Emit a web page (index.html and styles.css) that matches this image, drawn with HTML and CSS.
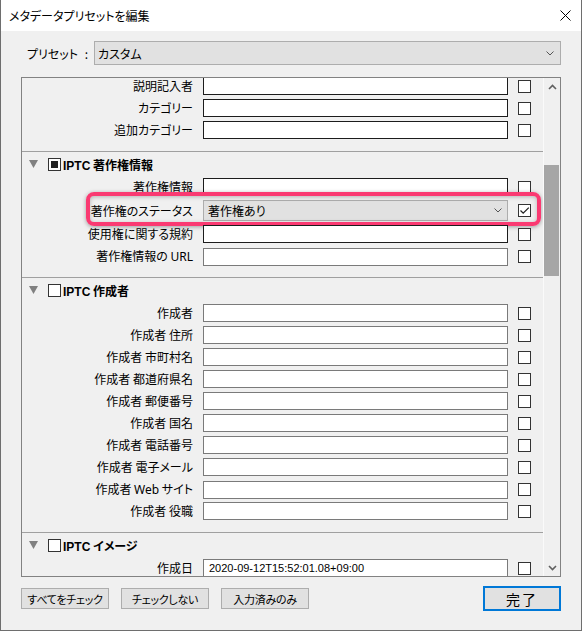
FILE: index.html
```html
<!DOCTYPE html>
<html lang="ja">
<head>
<meta charset="utf-8">
<title>メタデータプリセットを編集</title>
<link rel="stylesheet" href="styles.css">
</head>
<body>
<div class="window">
  <div class="titlebar">
    <span class="title">メタデータプリセットを編集</span>
    <svg class="close" width="11" height="11" viewBox="0 0 11 11"><path d="M0.5 0.5L10.5 10.5M10.5 0.5L0.5 10.5" stroke="#000" stroke-width="1" fill="none"/></svg>
  </div>
  <div class="content">
    <div class="preset-row">
      <div class="preset-label"><span>プリセット</span><span>:</span></div>
      <div class="select preset-select">
        <span>カスタム</span>
        <svg width="8" height="5" viewBox="0 0 8 5"><polyline points="0.5,0.5 4,4 7.5,0.5" fill="none" stroke="#555" stroke-width="1"/></svg>
      </div>
    </div>

    <div class="panel">
      <div class="list">
        <div class="scroll">
          <div class="group">
            <div class="row"><span class="label">説明記入者</span><span class="input dark"></span><span class="cb"></span></div>
            <div class="row"><span class="label">カテゴリー</span><span class="input dark"></span><span class="cb"></span></div>
            <div class="row"><span class="label">追加カテゴリー</span><span class="input dark"></span><span class="cb"></span></div>
          </div>
          <div class="sep"></div>

          <div class="group">
            <div class="header">
              <svg class="tri" width="9" height="8" viewBox="0 0 9 8"><polygon points="0,0 9,0 4.5,8" fill="#808080"/></svg>
              <span class="cb mixed"></span>
              <span class="htext"><span class="iptc">IPTC</span> 著作権情報</span>
            </div>
            <div class="row"><span class="label">著作権情報</span><span class="input dark"></span><span class="cb"></span></div>
            <div class="row tall">
              <span class="label">著作権のステータス</span>
              <span class="select status-select">
                <span>著作権あり</span>
                <svg width="8" height="5" viewBox="0 0 8 5"><polyline points="0.5,0.5 4,4 7.5,0.5" fill="none" stroke="#555" stroke-width="1"/></svg>
              </span>
              <span class="cb checked"><svg width="11" height="11" viewBox="0 0 11 11"><polyline points="1.5,5.5 4.2,8.2 9.8,2.6" fill="none" stroke="#222" stroke-width="1.3"/></svg></span>
              <span class="highlight"></span>
            </div>
            <div class="row"><span class="label">使用権に関する規約</span><span class="input dark"></span><span class="cb"></span></div>
            <div class="row"><span class="label">著作権情報の <span class="latin">URL</span></span><span class="input"></span><span class="cb"></span></div>
          </div>
          <div class="sep"></div>

          <div class="group">
            <div class="header">
              <svg class="tri" width="9" height="8" viewBox="0 0 9 8"><polygon points="0,0 9,0 4.5,8" fill="#808080"/></svg>
              <span class="cb"></span>
              <span class="htext"><span class="iptc">IPTC</span> 作成者</span>
            </div>
            <div class="row"><span class="label">作成者</span><span class="input"></span><span class="cb"></span></div>
            <div class="row"><span class="label">作成者 住所</span><span class="input"></span><span class="cb"></span></div>
            <div class="row"><span class="label">作成者 市町村名</span><span class="input"></span><span class="cb"></span></div>
            <div class="row"><span class="label">作成者 都道府県名</span><span class="input"></span><span class="cb"></span></div>
            <div class="row"><span class="label">作成者 郵便番号</span><span class="input"></span><span class="cb"></span></div>
            <div class="row"><span class="label">作成者 国名</span><span class="input"></span><span class="cb"></span></div>
            <div class="row"><span class="label">作成者 電話番号</span><span class="input"></span><span class="cb"></span></div>
            <div class="row"><span class="label">作成者 電子メール</span><span class="input"></span><span class="cb"></span></div>
            <div class="row"><span class="label">作成者 <span class="latin">Web</span> サイト</span><span class="input"></span><span class="cb"></span></div>
            <div class="row"><span class="label">作成者 役職</span><span class="input"></span><span class="cb"></span></div>
          </div>
          <div class="sep"></div>

          <div class="group">
            <div class="header">
              <svg class="tri" width="9" height="8" viewBox="0 0 9 8"><polygon points="0,0 9,0 4.5,8" fill="#808080"/></svg>
              <span class="cb"></span>
              <span class="htext"><span class="iptc">IPTC</span> イメージ</span>
            </div>
            <div class="row"><span class="label">作成日</span><span class="input value">2020-09-12T15:52:01.08+09:00</span><span class="cb"></span></div>
          </div>
        </div>
      </div>
      <div class="scrollbar">
        <div class="sb-btn"><svg width="9" height="6" viewBox="0 0 9 6"><polyline points="1,5 4.5,1.5 8,5" fill="none" stroke="#606060" stroke-width="1.6"/></svg></div>
        <div class="track"><div class="thumb"></div></div>
        <div class="sb-btn"><svg width="9" height="6" viewBox="0 0 9 6"><polyline points="1,1 4.5,4.5 8,1" fill="none" stroke="#606060" stroke-width="1.6"/></svg></div>
      </div>
    </div>

    <div class="buttons">
      <span class="btn">すべてをチェック</span>
      <span class="btn">チェックしない</span>
      <span class="btn">入力済みのみ</span>
      <span class="btn done">完了</span>
    </div>
  </div>
</div>
</body>
</html>
```

FILE: styles.css
```css
* { box-sizing: border-box; }

body {
  margin: 0;
  font-family: "Noto Sans CJK JP", "Noto Sans", sans-serif;
  font-size: 12px;
  color: #000;
  font-feature-settings: "palt";
}

.window {
  width: 582px;
  height: 631px;
  background: #f0f0f0;
  border: 1px solid #6e6e6e;
  border-top: none;
  display: flex;
  flex-direction: column;
}

.titlebar {
  height: 31px;
  flex: none;
  background: #fff;
  display: flex;
  align-items: center;
  justify-content: space-between;
  padding: 0 10px 0 8px;
}

.title { line-height: 1; }

.content {
  flex: 1;
  display: flex;
  flex-direction: column;
  padding: 0 20px;
}

.preset-row {
  display: flex;
  align-items: center;
  height: 24px;
  margin-top: 10px;
}

.preset-label {
  width: 73px;
  display: flex;
  justify-content: space-between;
  padding: 0 6px;
}

.select {
  display: flex;
  align-items: center;
  justify-content: space-between;
  background: #e1e1e1;
  border: 1px solid #adadad;
  padding: 0 6px 0 3px;
}

.preset-select {
  flex: 1;
  height: 24px;
}

.panel {
  margin-top: 12px;
  height: 500px;
  border: 1px solid #828282;
  display: flex;
}

.list {
  flex: 1;
  overflow: hidden;
}

.scroll { margin-top: -3px; }

.group { padding-bottom: 10px; }

.sep {
  height: 1px;
  background: #a0a0a0;
}

.row {
  position: relative;
  display: grid;
  grid-template-columns: 171px 305px 13px;
  column-gap: 10px;
  align-items: center;
  height: 22px;
}

.row.tall { height: 25px; }

.label {
  text-align: right;
  white-space: nowrap;
  line-height: 22px;
}

.latin { font-family: "Noto Sans", sans-serif; }

.input {
  height: 18px;
  border: 1px solid #7a7a7a;
  background: #fff;
}

.input.dark { border-color: #1c1c1c; }

.input.value {
  font-family: "Liberation Sans", sans-serif;
  font-size: 11px;
  line-height: 16px;
  padding-left: 5px;
  white-space: nowrap;
}

.status-select {
  height: 21px;
  padding-left: 4px;
  padding-right: 5px;
}

.cb {
  width: 13px;
  height: 13px;
  border: 1px solid #333;
  background: #fff;
  display: block;
}

.cb.checked svg { display: block; }

.cb.mixed { padding: 2px; }

.cb.mixed::after {
  content: "";
  display: block;
  width: 7px;
  height: 7px;
  background: #222;
}

.highlight {
  position: absolute;
  left: 64px;
  top: -6px;
  width: 455px;
  height: 34px;
  border: 4px solid #fa3a72;
  border-radius: 8px;
  box-shadow: 0 1px 4px rgba(0, 0, 0, 0.35), inset 0 1px 4px rgba(0, 0, 0, 0.25);
  pointer-events: none;
}

.header {
  height: 24px;
  display: flex;
  align-items: center;
  padding-left: 7px;
  font-weight: bold;
}

.tri { margin-right: 10px; flex: none; }

.header .cb { margin-right: 2px; flex: none; }

.iptc { font-family: "Liberation Sans", sans-serif; font-weight: bold; }

.scrollbar {
  width: 17px;
  flex: none;
  border-left: 1px solid #fafafa;
  display: flex;
  flex-direction: column;
}

.sb-btn {
  height: 17px;
  display: flex;
  align-items: center;
  justify-content: center;
}

.track { flex: 1; }

.thumb {
  margin-top: 70px;
  width: 15px;
  height: 111px;
  background: #a6a6a6;
}

.buttons {
  display: flex;
  align-items: center;
  gap: 12px;
  height: 25px;
  margin-top: 9px;
}

.btn {
  width: 88px;
  height: 21px;
  display: flex;
  align-items: center;
  justify-content: center;
  background: #e1e1e1;
  border: 1px solid #adadad;
  font-size: 11px;
  letter-spacing: -0.3px;
}

.btn.done {
  margin-left: auto;
  width: 78px;
  height: 25px;
  border: 2px solid #0078d7;
  font-size: 14px;
  letter-spacing: 2px;
}
```
